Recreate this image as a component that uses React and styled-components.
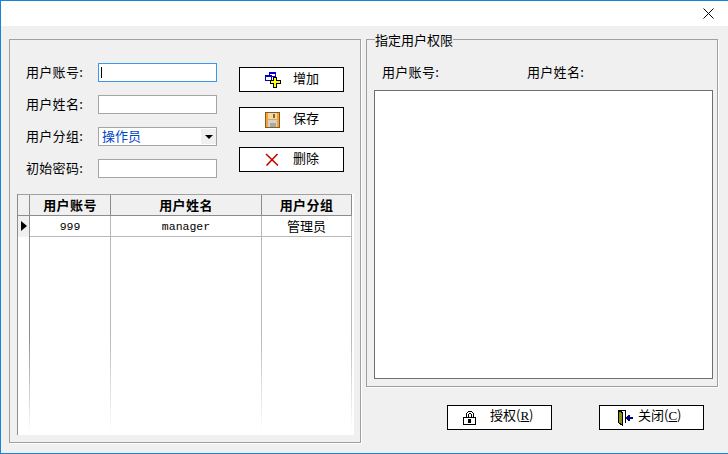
import React from "react";
import styled, { createGlobalStyle } from "styled-components";

const GlobalStyle = createGlobalStyle`
  html, body { margin: 0; padding: 0; background: #f0f0f0; }
  * { box-sizing: border-box; }
  body { font-family: "Noto Sans CJK SC", "Liberation Sans", sans-serif; font-size: 13px; color: #000; }
`;

const Window = styled.div`
  width: 728px;
  height: 454px;
  display: flex;
  flex-direction: column;
  border: 1px solid #1883d7;
  border-right: none;
  background: #f0f0f0;
  overflow: hidden;
`;

const TitleBar = styled.div`
  height: 25px;
  flex: none;
  background: #fff;
  display: flex;
  justify-content: flex-end;
  align-items: center;
  padding-right: 14px;
`;

const Body = styled.div`
  flex: 1;
  display: flex;
  gap: 5px;
  padding: 13px 0 0 8px;
`;

const LeftPanel = styled.div`
  width: 352px;
  height: 404px;
  border: 1px solid #a0a0a0;
  box-shadow: 1px 1px 0 #fff;
  padding: 23px 0 0 7px;
  display: flex;
  flex-direction: column;
`;

const FormArea = styled.div`
  height: 131px;
  display: flex;
`;

const Fields = styled.div`
  width: 208px;
  padding-left: 9px;
  display: flex;
  flex-direction: column;
  gap: 13px;
`;

const FieldRow = styled.div`
  height: 19px;
  display: flex;
  align-items: center;
`;

const Label = styled.span`
  width: 72px;
  flex: none;
  line-height: 16px;
  padding-bottom: 2px;
  letter-spacing: 0.3px;
  white-space: nowrap;
`;

const Input = styled.div`
  width: 119px;
  height: 19px;
  background: #fff;
  border: 1px solid ${(p) => (p.$focused ? "#3c96ec" : "#a5a5a5")};
  padding-left: 2px;
  display: flex;
  align-items: center;
`;

const Caret = styled.div`
  width: 1px;
  height: 11px;
  background: #000;
`;

const SelectValue = styled.span`
  flex: 1;
  color: #0046c8;
  line-height: 15px;
  padding: 0 0 2px 1px;
`;

const SelectArrow = styled.div`
  width: 15px;
  height: 15px;
  background: #f0f0f0;
  display: flex;
  align-items: center;
  justify-content: center;
  &::after {
    content: "";
    border-left: 4px solid transparent;
    border-right: 4px solid transparent;
    border-top: 4px solid #000;
  }
`;

const Actions = styled.div`
  padding: 4px 0 0 14px;
  display: flex;
  flex-direction: column;
  gap: 15px;
`;

const Button = styled.div`
  width: 105px;
  height: 25px;
  background: #fff;
  border: 1px solid #000;
  display: flex;
  align-items: center;
  padding-left: ${(p) => p.$pad || 25}px;
  white-space: nowrap;
`;

const IconSlot = styled.div`
  width: ${(p) => p.$width || 28}px;
  flex: none;
  display: flex;
  align-items: center;
`;

const ButtonText = styled.span`
  line-height: 18px;
  padding-bottom: 4px;
`;

const Grid = styled.div`
  width: 337px;
  height: 241px;
  display: flex;
  flex-direction: column;
  background: #fff;
  border-left: 1px solid #8c8c8c;
`;

const HeaderRow = styled.div`
  display: grid;
  grid-template-columns: 12px 81px 151px 90px;
  width: 334px;
  height: 22px;
  flex: none;
  background: #f0f0f0;
  border-top: 1px solid #a0a0a0;
  border-bottom: 1px solid #8c8c8c;
`;

const HeaderCell = styled.div`
  border-right: 1px solid #8c8c8c;
  font-weight: 700;
  letter-spacing: 0.4px;
  text-align: center;
  line-height: 19px;
`;

const DataRow = styled.div`
  display: grid;
  grid-template-columns: 12px 81px 151px 90px;
  width: 334px;
  height: 21px;
  flex: none;
  border-bottom: 1px solid #b9b9b9;
`;

const RowMarker = styled.div`
  background: #f0f0f0;
  border-right: 1px solid #8c8c8c;
  display: flex;
  align-items: center;
  padding-left: 3px;
  padding-bottom: 2px;
  &::after {
    content: "";
    border-top: 5px solid transparent;
    border-bottom: 5px solid transparent;
    border-left: 6px solid #000;
  }
`;

const DataCell = styled.div`
  border-right: 1px solid #b9b9b9;
  text-align: center;
  line-height: ${(p) => (p.$mono ? 21 : 20)}px;
  font-family: ${(p) => (p.$mono ? '"Liberation Mono", monospace' : "inherit")};
  font-size: ${(p) => (p.$mono ? 11.5 : 13)}px;
`;

const EmptyRows = styled.div`
  flex: 1;
  display: grid;
  grid-template-columns: 12px 81px 151px 90px;
  width: 334px;
`;

const EmptyCell = styled.div`
  border-right: 1px solid;
  border-image: linear-gradient(
      to bottom,
      ${(p) => (p.$marker ? "#8c8c8c" : "#b9b9b9")} 50%,
      #ffffff 98%
    )
    1;
`;

const RightColumn = styled.div`
  width: 352px;
  display: flex;
  flex-direction: column;
`;

const GroupBox = styled.fieldset`
  margin: -7px 0 0;
  width: 352px;
  height: 355px;
  border: 1px solid #a0a0a0;
  box-shadow: 1px 1px 0 #fff;
  padding: 0 4px 7px 7px;
  display: flex;
  flex-direction: column;
`;

const GroupTitle = styled.legend`
  padding: 0;
  margin-left: 1px;
  line-height: 15px;
  font-size: 13px;
`;

const InfoRow = styled.div`
  height: 43px;
  flex: none;
  display: flex;
  align-items: center;
  padding: 5px 0 0 8px;
`;

const InfoLabel = styled.span`
  width: 145px;
  line-height: 19px;
  letter-spacing: 0.3px;
`;

const PermissionBox = styled.div`
  width: 339px;
  height: 289px;
  background: #fff;
  border: 1px solid #6e6e6e;
`;

const Footer = styled.div`
  display: flex;
  padding: 18px 0 0 81px;
  gap: 47px;
`;

const Mnemonic = styled.span`
  text-decoration: underline;
  font-family: "Liberation Serif", serif;
`;

const CloseIcon = () => (
  <svg width="11" height="11" viewBox="0 0 11 11">
    <path d="M0.5 0.5L10.5 10.5M10.5 0.5L0.5 10.5" stroke="#000" strokeWidth="1" fill="none" />
  </svg>
);

const AddIcon = () => (
  <svg width="17" height="16" viewBox="0 0 17 16" shapeRendering="crispEdges">
    <rect x="4.5" y="0.5" width="6" height="4" fill="#fff" stroke="#0000c8" />
    <rect x="4" y="0" width="7" height="2" fill="#0000c8" />
    <rect x="0.5" y="3.5" width="6" height="5" fill="#fff" stroke="#0000c8" />
    <rect x="0" y="3" width="7" height="2" fill="#0000c8" />
    <path d="M8.5 5.5h3v3h4v3h-4v4h-3v-4h-3v-3h3z" fill="#ffff00" stroke="#000" />
  </svg>
);

const SaveIcon = () => (
  <svg width="15" height="16" viewBox="0 0 15 16" shapeRendering="crispEdges">
    <rect x="0.5" y="0.5" width="14" height="15" fill="#eda63e" stroke="#8a5a14" />
    <rect x="3" y="1" width="9" height="6" fill="#f2d9a6" />
    <rect x="8" y="2" width="2" height="4" fill="#7a6a4a" />
    <rect x="3" y="8" width="9" height="7" fill="#d2d2d2" />
    <rect x="5" y="11" width="6" height="4" fill="#a8a8a8" />
  </svg>
);

const DeleteIcon = () => (
  <svg width="14" height="14" viewBox="0 0 14 14">
    <path d="M1 1L13 12.5M12.5 1L1.5 12.5" stroke="#c80000" strokeWidth="1.6" fill="none" />
  </svg>
);

const LockIcon = () => (
  <svg width="14" height="14" viewBox="0 0 14 14" shapeRendering="crispEdges">
    <path d="M3.5 6.5V2.5L5.5 0.5H8.5L10.5 2.5V6.5M5.5 6.5V3.5L6.5 2.5H7.5L8.5 3.5V6.5" fill="none" stroke="#000" />
    <rect x="0.5" y="6.5" width="12" height="7" fill="#fff" stroke="#000" />
    <rect x="5" y="8" width="3" height="4" fill="#000" />
  </svg>
);

const DoorIcon = () => (
  <svg width="16" height="16" viewBox="0 0 16 16" shapeRendering="crispEdges">
    <path d="M0.5 0.5H7.5V12.5" fill="none" stroke="#000" />
    <path d="M0.5 0.5L4.5 2.5V15.5L0.5 12.5Z" fill="#8f8f10" stroke="#000" />
    <path d="M10 5h2v2h3v2h-3v2h-2v-1h-1v-1h-1v-2h1v-1h1z" fill="#000080" />
  </svg>
);

const App = () => {
  return (
    <>
      <GlobalStyle />
      <Window>
        <TitleBar>
          <CloseIcon />
        </TitleBar>
        <Body>
          <LeftPanel>
            <FormArea>
              <Fields>
                <FieldRow>
                  <Label>用户账号:</Label>
                  <Input $focused>
                    <Caret />
                  </Input>
                </FieldRow>
                <FieldRow>
                  <Label>用户姓名:</Label>
                  <Input />
                </FieldRow>
                <FieldRow>
                  <Label>用户分组:</Label>
                  <Input>
                    <SelectValue>操作员</SelectValue>
                    <SelectArrow />
                  </Input>
                </FieldRow>
                <FieldRow>
                  <Label>初始密码:</Label>
                  <Input />
                </FieldRow>
              </Fields>
              <Actions>
                <Button>
                  <IconSlot>
                    <AddIcon />
                  </IconSlot>
                  <ButtonText>增加</ButtonText>
                </Button>
                <Button>
                  <IconSlot>
                    <SaveIcon />
                  </IconSlot>
                  <ButtonText>保存</ButtonText>
                </Button>
                <Button>
                  <IconSlot>
                    <DeleteIcon />
                  </IconSlot>
                  <ButtonText>删除</ButtonText>
                </Button>
              </Actions>
            </FormArea>
            <Grid>
              <HeaderRow>
                <HeaderCell />
                <HeaderCell>用户账号</HeaderCell>
                <HeaderCell>用户姓名</HeaderCell>
                <HeaderCell>用户分组</HeaderCell>
              </HeaderRow>
              <DataRow>
                <RowMarker />
                <DataCell $mono>999</DataCell>
                <DataCell $mono>manager</DataCell>
                <DataCell>管理员</DataCell>
              </DataRow>
              <EmptyRows>
                <EmptyCell $marker />
                <EmptyCell />
                <EmptyCell />
                <EmptyCell />
              </EmptyRows>
            </Grid>
          </LeftPanel>
          <RightColumn>
            <GroupBox>
              <GroupTitle>指定用户权限</GroupTitle>
              <InfoRow>
                <InfoLabel>用户账号:</InfoLabel>
                <InfoLabel>用户姓名:</InfoLabel>
              </InfoRow>
              <PermissionBox />
            </GroupBox>
            <Footer>
              <Button $pad={15}>
                <IconSlot $width={27}>
                  <LockIcon />
                </IconSlot>
                <ButtonText>
                  授权(<Mnemonic>R</Mnemonic>)
                </ButtonText>
              </Button>
              <Button $pad={18}>
                <IconSlot $width={20}>
                  <DoorIcon />
                </IconSlot>
                <ButtonText>
                  关闭(<Mnemonic>C</Mnemonic>)
                </ButtonText>
              </Button>
            </Footer>
          </RightColumn>
        </Body>
      </Window>
    </>
  );
};

export default App;
